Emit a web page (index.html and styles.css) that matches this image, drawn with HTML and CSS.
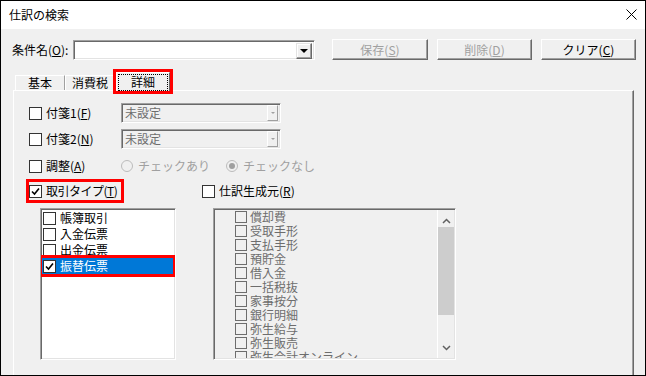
FILE: index.html
```html
<!DOCTYPE html>
<html lang="ja">
  <head>
    <meta charset="UTF-8" />
    <title>仕訳の検索</title>
    <link rel="stylesheet" href="styles.css">
  </head>
  <body>
    <div class="window">
      <!-- Title bar -->
      <div class="titlebar">
        <span class="title">仕訳の検索</span>
        <svg class="close" width="11" height="11" viewBox="0 0 11 11">
          <path d="M0.5 0.5 L10.5 10.5 M10.5 0.5 L0.5 10.5" stroke="#000" stroke-width="1" fill="none" />
        </svg>
      </div>

      <!-- Condition row -->
      <div class="cond-row">
        <span class="cond-label">条件名(<u>O</u>):</span>
        <div class="combo">
          <span class="combo-btn"><span class="arrow-down"></span></span>
        </div>
        <button class="btn btn-save" disabled>保存(<u>S</u>)</button>
        <button class="btn" disabled>削除(<u>D</u>)</button>
        <button class="btn btn-active">クリア(<u>C</u>)</button>
      </div>

      <!-- Tabs -->
      <div class="tabs">
        <div class="tab">基本</div>
        <div class="tab">消費税</div>
        <div class="tab tab-selected mark"><span class="focus">詳細</span></div>
      </div>

      <div class="panel">
        <div class="field-row">
          <label class="chk-label"><span class="chk"></span>付箋1(<u>F</u>)</label>
          <div class="select"><span class="select-text">未設定</span><span class="select-btn"><span class="arrow-small"></span></span></div>
        </div>
        <div class="field-row row2">
          <label class="chk-label"><span class="chk"></span>付箋2(<u>N</u>)</label>
          <div class="select"><span class="select-text">未設定</span><span class="select-btn"><span class="arrow-small"></span></span></div>
        </div>
        <div class="field-row row3">
          <label class="chk-label"><span class="chk"></span>調整(<u>A</u>)</label>
          <span class="radio-label"><span class="radio"></span>チェックあり</span>
          <span class="radio-label radio-second"><span class="radio on"></span>チェックなし</span>
        </div>
        <div class="field-row row4">
          <label class="chk-label type-label mark"><span class="chk checked"><svg width="11" height="11" viewBox="0 0 11 11"><path d="M2 5.5 L4.5 8 L9 2.5" stroke="#000" stroke-width="1.6" fill="none" /></svg></span>取引タイプ(<u>T</u>)</label>
          <label class="chk-label source-label"><span class="chk"></span>仕訳生成元(<u>R</u>)</label>
        </div>

        <div class="lists">
          <div class="listbox left-list">
            <div class="item"><span class="chk"></span>帳簿取引</div>
            <div class="item"><span class="chk"></span>入金伝票</div>
            <div class="item"><span class="chk"></span>出金伝票</div>
            <div class="item selected mark"><span class="chk checked"><svg width="11" height="11" viewBox="0 0 11 11"><path d="M2 5.5 L4.5 8 L9 2.5" stroke="#000" stroke-width="1.6" fill="none" /></svg></span>振替伝票</div>
          </div>

          <div class="listbox right-list">
            <div class="items">
              <div class="item"><span class="chk"></span>償却費</div>
              <div class="item"><span class="chk"></span>受取手形</div>
              <div class="item"><span class="chk"></span>支払手形</div>
              <div class="item"><span class="chk"></span>預貯金</div>
              <div class="item"><span class="chk"></span>借入金</div>
              <div class="item"><span class="chk"></span>一括税抜</div>
              <div class="item"><span class="chk"></span>家事按分</div>
              <div class="item"><span class="chk"></span>銀行明細</div>
              <div class="item"><span class="chk"></span>弥生給与</div>
              <div class="item"><span class="chk"></span>弥生販売</div>
              <div class="item"><span class="chk"></span>弥生会計オンライン</div>
            </div>
            <div class="scrollbar">
              <svg class="sb-arrow" width="9" height="6" viewBox="0 0 9 6"><path d="M1 5 L4.5 1.5 L8 5" stroke="#606060" stroke-width="1.5" fill="none" /></svg>
              <div class="thumb"></div>
              <svg class="sb-arrow sb-down" width="9" height="6" viewBox="0 0 9 6"><path d="M1 1 L4.5 4.5 L8 1" stroke="#606060" stroke-width="1.5" fill="none" /></svg>
            </div>
          </div>
        </div>
      </div>
    </div>
  </body>
</html>
```

FILE: styles.css
```css
* {
  box-sizing: border-box;
}

body {
  margin: 0;
  font-family: "Noto Sans CJK JP", "Noto Sans", sans-serif;
  font-size: 12px;
  line-height: 14px;
  color: #000;
}

u {
  text-underline-offset: 1px;
}

.window {
  width: 646px;
  height: 376px;
  border: 1px solid #000;
  background: #f0f0f0;
  display: flex;
  flex-direction: column;
  overflow: hidden;
}

/* Title bar */
.titlebar {
  height: 28px;
  flex-shrink: 0;
  background: #fff;
  display: flex;
  align-items: center;
  justify-content: space-between;
  padding: 0 8px 0 8px;
}

.title {
  font-size: 12px;
}

.close {
  margin-bottom: 1px;
}

/* Condition row */
.cond-row {
  display: flex;
  align-items: center;
  height: 21px;
  margin-top: 10px;
  padding-left: 11px;
  flex-shrink: 0;
}

.cond-label {
  width: 61px;
}

.combo {
  width: 242px;
  height: 20px;
  background: #fff;
  border: 1px solid;
  border-color: #a0a0a0 #fff #fff #a0a0a0;
  box-shadow: inset 1px 1px #696969, inset -1px -1px #e3e3e3;
  display: flex;
  justify-content: flex-end;
  padding: 2px;
}

.combo-btn {
  width: 16px;
  height: 16px;
  background: #f0f0f0;
  border: 1px solid;
  border-color: #e3e3e3 #696969 #696969 #e3e3e3;
  box-shadow: inset -1px -1px #a0a0a0, inset 1px 1px #fff;
  display: flex;
  align-items: center;
  justify-content: center;
}

.arrow-down {
  width: 0;
  height: 0;
  border-left: 4px solid transparent;
  border-right: 4px solid transparent;
  border-top: 4px solid #000;
}

.btn {
  width: 95px;
  height: 21px;
  margin-left: 9px;
  padding: 0;
  font-family: inherit;
  font-size: 12px;
  color: #a0a0a0;
  background: #f0f0f0;
  border: 1px solid;
  border-color: #fff #696969 #696969 #fff;
  box-shadow: inset -1px -1px #a0a0a0;
}

.btn-save {
  width: 96px;
  margin-left: 17px;
}

.btn-active {
  color: #000;
}

/* Tabs */
.tabs {
  display: flex;
  align-items: flex-end;
  height: 18px;
  margin-top: 12px;
  padding-left: 14px;
  flex-shrink: 0;
}

.tab {
  width: 50px;
  height: 15px;
  text-align: center;
  line-height: 14px;
  border: 1px solid;
  border-bottom: none;
  border-color: #fff #a0a0a0 transparent #fff;
}

.tab-selected {
  position: relative;
  z-index: 1;
  width: 54px;
  height: 19px;
  margin-left: 1px;
  margin-bottom: -1px;
  background: #f0f0f0;
  border-right-color: #696969;
  padding-top: 2px;
}

.focus {
  display: inline-block;
  width: 48px;
  height: 15px;
  outline: 1px dotted #000;
}

/* Red annotation boxes */
.mark {
  outline: 3px solid #f00;
}

/* Panel */
.panel {
  flex: 1;
  margin: 0 11px 0 12px;
  border-top: 1px solid #fff;
  border-left: 1px solid #fff;
  border-right: 1px solid #696969;
  box-shadow: inset -1px 0 #a0a0a0;
  padding: 12px 0 0 15px;
}

.field-row {
  display: flex;
  align-items: center;
  height: 20px;
}

.row2 {
  margin-top: 6px;
}

.row3 {
  margin-top: 8px;
  height: 18px;
}

.row4 {
  margin-top: 7px;
  height: 18px;
}

.chk-label {
  display: flex;
  align-items: center;
  width: 92px;
  white-space: nowrap;
}

.chk {
  display: inline-flex;
  align-items: center;
  justify-content: center;
  width: 13px;
  height: 13px;
  margin-right: 4px;
  background: #fff;
  border: 1px solid #333;
  flex-shrink: 0;
}

.type-label {
  width: 92px;
  height: 18px;
  letter-spacing: -0.5px;
}

.source-label {
  margin-left: 81px;
  width: auto;
}

.select {
  width: 160px;
  height: 20px;
  border: 1px solid;
  border-color: #a0a0a0 #fff #fff #a0a0a0;
  box-shadow: inset 1px 1px #696969, inset -1px -1px #e3e3e3;
  display: flex;
  align-items: center;
  justify-content: space-between;
  padding: 2px;
  color: #6d6d6d;
}

.select-text {
  padding-left: 1px;
}

.select-btn {
  width: 11px;
  height: 16px;
  border: 1px solid;
  border-color: #fff #a0a0a0 #a0a0a0 #fff;
  display: flex;
  align-items: center;
  justify-content: center;
}

.arrow-small {
  width: 0;
  height: 0;
  border-left: 2px solid transparent;
  border-right: 2px solid transparent;
  border-top: 2px solid #a0a0a0;
}

.radio-label {
  display: flex;
  align-items: center;
  color: #a0a0a0;
}

.radio {
  width: 12px;
  height: 12px;
  border: 1px solid #bcbcbc;
  border-radius: 50%;
  margin-right: 5px;
  display: flex;
  align-items: center;
  justify-content: center;
}

.radio.on::after {
  content: "";
  width: 6px;
  height: 6px;
  border-radius: 50%;
  background: #a0a0a0;
}

.radio-second {
  margin-left: 16px;
}

/* List boxes */
.lists {
  display: flex;
  height: 152px;
  margin-top: 8px;
}

.listbox {
  height: 152px;
  border: 1px solid;
  border-color: #a0a0a0 #fff #fff #a0a0a0;
  box-shadow: inset 1px 1px #696969, inset -1px -1px #e3e3e3;
  padding: 1px;
  overflow: hidden;
}

.left-list {
  width: 136px;
  margin-left: 11px;
  background: #fff;
}

.left-list .item {
  display: flex;
  align-items: center;
  height: 16px;
  padding-left: 1px;
  margin-right: 1px;
  font-size: 12px;
}

.item.selected {
  background: #0078d7;
  color: #fff;
}

.right-list {
  width: 243px;
  margin-left: 37px;
  background: #f0f0f0;
  display: flex;
}

.items {
  flex: 1;
  overflow: hidden;
}

.right-list .item {
  display: flex;
  align-items: center;
  height: 14px;
  line-height: 14px;
  padding-left: 20px;
  color: #6d6d6d;
  white-space: nowrap;
}

.right-list .chk {
  width: 12px;
  height: 12px;
  margin-right: 3px;
  background: transparent;
  border-color: #6d6d6d;
}

.scrollbar {
  width: 17px;
  border-left: 1px solid #fff;
  display: flex;
  flex-direction: column;
  align-items: center;
}

.sb-arrow {
  margin-top: 8px;
  margin-bottom: 3px;
}

.thumb {
  width: 16px;
  height: 88px;
  background: #cdcdcd;
}

.sb-down {
  margin-top: auto;
  margin-bottom: 7px;
}
```
